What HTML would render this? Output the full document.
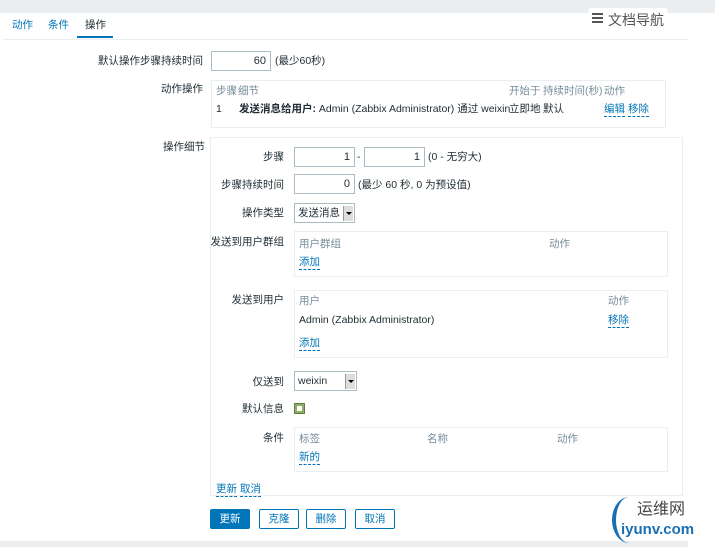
<!DOCTYPE html>
<html><head><meta charset="utf-8"><style>
*{box-sizing:border-box;margin:0;padding:0}
body{width:715px;height:547px;background:#fff;font-family:"Liberation Sans","Noto Sans CJK SC",sans-serif;font-size:10.5px;color:#1f2c33;position:relative;overflow:hidden}
.a{position:absolute;white-space:nowrap;line-height:15px}
.r{text-align:right}
.lnk{color:#0275b8;border-bottom:1px dashed #0275b8;line-height:14px}
.g{color:#768d99}
.in{position:absolute;border:1px solid #acbbc2;background:#fff;text-align:right;padding-right:4px;line-height:18px;font-size:11px}
.box{position:absolute;border:1px solid #ebeef0}
.sel{position:absolute;border:1px solid #acbbc2;background:#fff;line-height:18px;padding-left:3px;font-size:10.5px}
.sel i{position:absolute;right:1px;top:2px;width:10px;height:15px;background:#ddd;border-left:1px solid #999}
.sel i:after{content:"";position:absolute;left:2px;top:6px;border:3px solid transparent;border-top:3px solid #000}
.btn{position:absolute;top:509px;height:20px;width:40px;border:1px solid #0275b8;color:#0275b8;text-align:center;line-height:18px;border-radius:2px;background:#fff}
</style></head><body>
<div class="a" style="left:0;top:0;width:715px;height:13px;background:#ebeef0"></div>
<div class="a" style="left:0;top:541px;width:688px;height:6px;background:#ebeef0"></div>
<div class="a" style="left:3px;top:39px;width:685px;height:1px;background:#ebeef0"></div>
<div class="a" style="left:12px;top:18px;color:#0275b8">动作</div>
<div class="a" style="left:48px;top:18px;color:#0275b8">条件</div>
<div class="a" style="left:85px;top:18px">操作</div>
<div class="a" style="left:77px;top:36px;width:36px;height:2px;background:#0275b8"></div>
<div class="a" style="left:588px;top:8px;width:80px;height:26px;background:#fff;border-radius:3px"></div>
<div class="a" style="left:592px;top:13px;width:11px;height:10px;border-top:2px solid #555;border-bottom:2px solid #555"></div>
<div class="a" style="left:592px;top:17px;width:11px;height:2px;background:#555"></div>
<div class="a" style="left:608px;top:11px;font-size:14px;line-height:18px;color:#555">文档导航</div>

<div class="a r" style="left:60px;width:143px;top:54px">默认操作步骤持续时间</div>
<div class="in" style="left:211px;top:51px;width:60px;height:20px">60</div>
<div class="a" style="left:275px;top:54px">(最少60秒)</div>

<div class="a r" style="left:100px;width:103px;top:82px">动作操作</div>
<div class="box" style="left:211px;top:80px;width:455px;height:48px"></div>
<div class="a g" style="left:216px;top:84px">步骤</div><div class="a g" style="left:238px;top:84px">细节</div>
<div class="a g" style="left:509px;top:84px">开始于</div><div class="a g" style="left:543px;top:84px">持续时间(秒)</div><div class="a g" style="left:604px;top:84px">动作</div>
<div class="a" style="left:216px;top:102px">1</div>
<div class="a" style="left:239px;top:102px"><b>发送消息给用户:</b> Admin (Zabbix Administrator) 通过 weixin</div>
<div class="a" style="left:509px;top:102px">立即地</div><div class="a" style="left:543px;top:102px">默认</div>
<div class="a lnk" style="left:604px;top:102px">编辑</div><div class="a lnk" style="left:628px;top:102px">移除</div>

<div class="a" style="left:163px;top:140px">操作细节</div>
<div class="box" style="left:210px;top:137px;width:473px;height:359px"></div>
<div class="a r" style="left:200px;width:84px;top:150px">步骤</div>
<div class="in" style="left:294px;top:147px;width:61px;height:20px">1</div>
<div class="a" style="left:357px;top:150px">-</div>
<div class="in" style="left:364px;top:147px;width:61px;height:20px">1</div>
<div class="a" style="left:428px;top:150px">(0 - 无穷大)</div>
<div class="a r" style="left:200px;width:84px;top:178px">步骤持续时间</div>
<div class="in" style="left:294px;top:174px;width:61px;height:20px">0</div>
<div class="a" style="left:358px;top:178px">(最少 60 秒, 0 为预设值)</div>
<div class="a r" style="left:200px;width:84px;top:206px">操作类型</div>
<div class="sel" style="left:294px;top:203px;width:61px;height:20px">发送消息<i></i></div>

<div class="a r" style="left:200px;width:84px;top:235px">发送到用户群组</div>
<div class="box" style="left:294px;top:231px;width:374px;height:46px"></div>
<div class="a g" style="left:299px;top:237px">用户群组</div><div class="a g" style="left:549px;top:237px">动作</div>
<div class="a lnk" style="left:299px;top:255px">添加</div>

<div class="a r" style="left:200px;width:84px;top:293px">发送到用户</div>
<div class="box" style="left:294px;top:290px;width:374px;height:68px"></div>
<div class="a g" style="left:299px;top:294px">用户</div><div class="a g" style="left:608px;top:294px">动作</div>
<div class="a" style="left:299px;top:313px">Admin (Zabbix Administrator)</div><div class="a lnk" style="left:608px;top:313px">移除</div>
<div class="a lnk" style="left:299px;top:336px">添加</div>

<div class="a r" style="left:200px;width:84px;top:375px">仅送到</div>
<div class="sel" style="left:294px;top:371px;width:63px;height:20px">weixin<i></i></div>
<div class="a r" style="left:200px;width:84px;top:402px">默认信息</div>
<div class="a" style="left:294px;top:403px;width:11px;height:11px;background:#8fae6a;border:1px solid #5f7d3f"><div style="position:absolute;left:2px;top:2px;width:5px;height:5px;background:#fff"></div></div>
<div class="a r" style="left:200px;width:84px;top:431px">条件</div>
<div class="box" style="left:294px;top:427px;width:374px;height:45px"></div>
<div class="a g" style="left:299px;top:432px">标签</div><div class="a g" style="left:427px;top:432px">名称</div><div class="a g" style="left:557px;top:432px">动作</div>
<div class="a lnk" style="left:299px;top:450px">新的</div>
<div class="a lnk" style="left:216px;top:482px">更新</div><div class="a lnk" style="left:240px;top:482px">取消</div>

<div class="btn" style="left:210px;background:#0275b8;color:#fff">更新</div>
<div class="btn" style="left:259px">克隆</div>
<div class="btn" style="left:306px">删除</div>
<div class="btn" style="left:355px">取消</div>

<div class="a" style="left:612px;top:497px;width:34px;height:46px;border-left:4px solid #1a6fb3;border-radius:50%"></div>
<div class="a" style="left:637px;top:500px;font-size:16px;line-height:20px;color:#444">运维网</div>
<div class="a" style="left:621px;top:521px;font-size:15px;line-height:18px;color:#1a6fb3;font-weight:bold">iyunv.com</div>
</body></html>
